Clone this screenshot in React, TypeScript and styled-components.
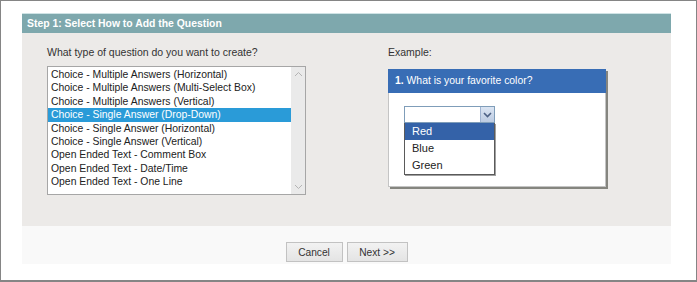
import React from "react";
import styled, { createGlobalStyle } from "styled-components";

const GlobalStyle = createGlobalStyle`
  html, body {
    margin: 0;
    padding: 0;
    background: #ffffff;
  }
  * {
    box-sizing: border-box;
  }
`;

const questionTypes = [
  "Choice - Multiple Answers (Horizontal)",
  "Choice - Multiple Answers (Multi-Select Box)",
  "Choice - Multiple Answers (Vertical)",
  "Choice - Single Answer (Drop-Down)",
  "Choice - Single Answer (Horizontal)",
  "Choice - Single Answer (Vertical)",
  "Open Ended Text - Comment Box",
  "Open Ended Text - Date/Time",
  "Open Ended Text - One Line",
];

const colors = ["Red", "Blue", "Green"];

const App = () => {
  return (
    <>
      <GlobalStyle />
      <Frame>
        <Panel>
          <StepHeader>Step 1: Select How to Add the Question</StepHeader>
          <Body>
            <LeftCol>
              <Label>What type of question do you want to create?</Label>
              <ListBox>
                <ListItems>
                  {questionTypes.map((q, i) => (
                    <ListItem key={q} selected={i === 3}>
                      {q}
                    </ListItem>
                  ))}
                </ListItems>
                <ScrollTrack>
                  <ScrollArrow>
                    <svg width="9" height="6" viewBox="0 0 9 6">
                      <path d="M1 5 L4.5 1.5 L8 5" fill="none" stroke="#b4b4b4" strokeWidth="1" />
                    </svg>
                  </ScrollArrow>
                  <ScrollArrow>
                    <svg width="9" height="6" viewBox="0 0 9 6">
                      <path d="M1 1 L4.5 4.5 L8 1" fill="none" stroke="#b4b4b4" strokeWidth="1" />
                    </svg>
                  </ScrollArrow>
                </ScrollTrack>
              </ListBox>
            </LeftCol>
            <RightCol>
              <Label>Example:</Label>
              <Card>
                <CardHeader>
                  <b>1.</b> What is your favorite color?
                </CardHeader>
                <CardBody>
                  <SelectBox>
                    <SelectValue />
                    <SelectButton>
                      <svg width="9" height="6" viewBox="0 0 9 6">
                        <path d="M1 1 L4.5 4.5 L8 1" fill="none" stroke="#4d6185" strokeWidth="1.6" />
                      </svg>
                    </SelectButton>
                  </SelectBox>
                  <DropList>
                    {colors.map((c, i) => (
                      <DropItem key={c} selected={i === 0}>
                        {c}
                      </DropItem>
                    ))}
                  </DropList>
                </CardBody>
              </Card>
            </RightCol>
          </Body>
          <Footer>
            <Button w={57}>Cancel</Button>
            <Button w={61}>Next &gt;&gt;</Button>
          </Footer>
        </Panel>
      </Frame>
    </>
  );
};

export default App;

const Frame = styled.div`
  width: 697px;
  height: 282px;
  border: 1px solid #858585;
  border-bottom-width: 2px;
  padding: 12px 25px 0 21px;
  font-family: "Liberation Sans", Arial, sans-serif;
`;

const Panel = styled.div`
  width: 649px;
  display: flex;
  flex-direction: column;
`;

const StepHeader = styled.div`
  height: 20px;
  background: #7ea8ad;
  border-top: 1px solid #cfe3e5;
  color: #ffffff;
  font-weight: bold;
  font-size: 10.4px;
  line-height: 19px;
  padding-left: 5px;
`;

const Body = styled.div`
  height: 193px;
  background: #eceae8;
  display: flex;
  padding: 12px 0 0 25px;
`;

const LeftCol = styled.div`
  width: 259px;
  margin-right: 82px;
  display: flex;
  flex-direction: column;
`;

const RightCol = styled.div`
  width: 221px;
  display: flex;
  flex-direction: column;
`;

const Label = styled.div`
  font-size: 10.5px;
  line-height: 14px;
  color: #333333;
  margin-bottom: 7px;
`;

const ListBox = styled.div`
  height: 129px;
  border: 1px solid #a6a6a6;
  background: #ffffff;
  display: flex;
`;

const ListItems = styled.div`
  flex: 1;
  padding-top: 1px;
`;

const ListItem = styled.div<{ selected?: boolean }>`
  height: 13.4px;
  line-height: 13.4px;
  font-size: 10.4px;
  padding-left: 3px;
  white-space: nowrap;
  color: ${({ selected }) => (selected ? "#ffffff" : "#222222")};
  background: ${({ selected }) => (selected ? "#2a9bd8" : "transparent")};
`;

const ScrollTrack = styled.div`
  width: 14px;
  background: #eaeaea;
  display: flex;
  flex-direction: column;
  justify-content: space-between;
`;

const ScrollArrow = styled.div`
  height: 14px;
  display: flex;
  align-items: center;
  justify-content: center;
`;

const Card = styled.div`
  margin-top: 3px;
  width: 218px;
  height: 118px;
  background: #ffffff;
  border: 1px solid #c4c4c4;
  box-shadow: 2px 2px 0 #85857f;
`;

const CardHeader = styled.div`
  height: 24px;
  margin: -1px -1px 0;
  background: #386db5;
  color: #ffffff;
  font-size: 10.4px;
  line-height: 24px;
  padding-left: 7px;
`;

const CardBody = styled.div`
  padding: 13px 0 0 15px;
`;

const SelectBox = styled.div`
  width: 91px;
  height: 17px;
  border: 1px solid #7f9db9;
  background: #ffffff;
  display: flex;
`;

const SelectValue = styled.div`
  flex: 1;
`;

const SelectButton = styled.div`
  width: 14px;
  background: linear-gradient(#dbe5f3, #bccbe2);
  border-left: 1px solid #9fb3d1;
  display: flex;
  align-items: center;
  justify-content: center;
`;

const DropList = styled.div`
  width: 91px;
  border: 1px solid #5a5a5a;
  border-top: none;
  background: #ffffff;
  box-shadow: 1px 1px 0 #a0a0a0;
`;

const DropItem = styled.div<{ selected?: boolean }>`
  height: 17px;
  line-height: 17px;
  font-size: 11px;
  padding-left: 7px;
  color: ${({ selected }) => (selected ? "#ffffff" : "#222222")};
  background: ${({ selected }) => (selected ? "#3462a8" : "transparent")};
`;

const Footer = styled.div`
  height: 38px;
  background: #f9f9f9;
  display: flex;
  justify-content: center;
  gap: 4px;
  padding-top: 16px;
`;

const Button = styled.button<{ w: number }>`
  width: ${({ w }) => w}px;
  height: 20px;
  padding: 0;
  border: 1px solid #c2c2c2;
  background: linear-gradient(#f2f2f2, #e4e4e4);
  font-family: "Liberation Sans", Arial, sans-serif;
  font-size: 10.2px;
  color: #333333;
  cursor: pointer;
`;
